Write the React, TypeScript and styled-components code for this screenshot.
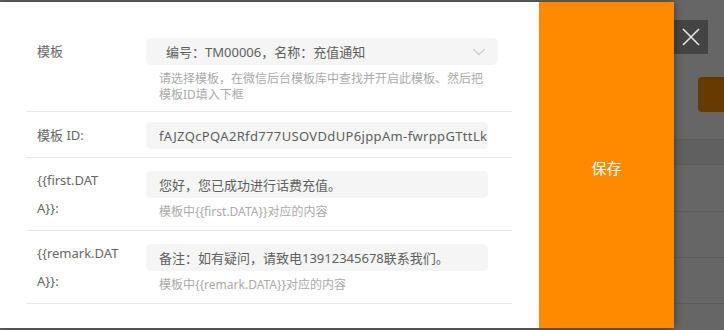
import React from "react";
import styled, { createGlobalStyle } from "styled-components";

const Global = createGlobalStyle`
  html, body { margin: 0; padding: 0; }
  body {
    width: 724px;
    height: 330px;
    overflow: hidden;
    background: #666666;
    font-family: "Noto Sans", "Noto Sans CJK SC", sans-serif;
  }
`;

const Screen = styled.div`
  display: flex;
  align-items: flex-start;
  width: 724px;
  height: 330px;
  background: #666666;
  overflow: hidden;
`;

const Modal = styled.div`
  display: flex;
  width: 674px;
  height: 326px;
  margin-top: 2px;
  flex-shrink: 0;
  background: #ffffff;
  box-shadow: 0 0 8px rgba(0, 0, 0, 0.45);
  position: relative;
  z-index: 1;
`;

const FormBody = styled.div`
  width: 539px;
  box-sizing: border-box;
  padding: 26px 27px 26px 26px;
`;

const Row = styled.div<{ $wrap?: boolean }>`
  display: grid;
  grid-template-columns: 109px 1fr;
  padding: ${(p) => (p.$wrap ? "8px" : "10px")} 0 8px 11px;
  border-bottom: 1px solid #e8e8e8;
`;

const Label = styled.div<{ $wrap?: boolean }>`
  width: 82px;
  font-size: 13px;
  line-height: ${(p) => (p.$wrap ? "28px" : "27px")};
  color: #666666;
  word-break: break-all;
`;

const Field = styled.div<{ $wrap?: boolean }>`
  display: flex;
  flex-direction: column;
  padding-top: ${(p) => (p.$wrap ? "5px" : "0")};
  min-width: 0;
`;

const Box = styled.div<{ $wide?: boolean }>`
  display: flex;
  align-items: center;
  height: 27px;
  width: ${(p) => (p.$wide ? "352px" : "342px")};
  box-sizing: border-box;
  padding: 0 ${(p) => (p.$wide ? "12px" : "1px")} 0 ${(p) => (p.$wide ? "20px" : "13px")};
  background: #f5f5f5;
  border-radius: 5px;
  font-size: 13px;
  color: #5f5f5f;
  overflow: hidden;
`;

const BoxText = styled.span<{ $spaced?: boolean }>`
  flex: 1;
  white-space: nowrap;
  overflow: hidden;
  letter-spacing: ${(p) => (p.$spaced ? "0.35px" : "0")};
`;

const Hint = styled.div`
  margin-top: 6px;
  padding-left: 13px;
  font-size: 12px;
  line-height: 16px;
  color: #aaaaaa;
  width: 330px;
`;

const SaveButton = styled.button`
  flex: 1;
  border: none;
  margin: 0;
  background: #ff8a00;
  color: #ffffff;
  font-family: "Noto Sans CJK SC", sans-serif;
  font-size: 15px;
  display: flex;
  justify-content: center;
  align-items: flex-start;
  padding-top: 155px;
`;

const Side = styled.div`
  flex: 1;
  display: flex;
  flex-direction: column;
  align-items: flex-start;
`;

const CloseButton = styled.div`
  width: 34px;
  height: 34px;
  margin-top: 20px;
  background: #444444;
  display: flex;
  align-items: center;
  justify-content: center;
`;

const BrownButton = styled.div`
  width: 40px;
  height: 35px;
  margin-top: 23px;
  margin-left: 24px;
  background: #663a00;
  border-radius: 4px;
`;

const Band = styled.div<{ $h: number; $dark?: boolean }>`
  width: 100%;
  height: ${(p) => p.$h}px;
  background: ${(p) => (p.$dark ? "#606060" : "transparent")};
  border-bottom: 1px solid #5c5c5c;
  box-sizing: border-box;
`;

const Chevron = () => (
  <svg width="14" height="8" viewBox="0 0 14 8">
    <path d="M1 1 L7 6.5 L13 1" fill="none" stroke="#cfcfcf" strokeWidth="1.3" />
  </svg>
);

const CloseIcon = () => (
  <svg width="20" height="20" viewBox="0 0 20 20">
    <path d="M2 2 L18 18 M18 2 L2 18" stroke="#e6e6e6" strokeWidth="1.6" />
  </svg>
);

export default function App() {
  return (
    <>
      <Global />
      <Screen>
        <Modal>
          <FormBody>
            <Row>
              <Label>模板</Label>
              <Field>
                <Box $wide>
                  <BoxText>编号：TM00006，名称：充值通知</BoxText>
                  <Chevron />
                </Box>
                <Hint>请选择模板，在微信后台模板库中查找并开启此模板、然后把模板ID填入下框</Hint>
              </Field>
            </Row>
            <Row>
              <Label>模板 ID:</Label>
              <Field>
                <Box>
                  <BoxText $spaced>fAJZQcPQA2Rfd777USOVDdUP6jppAm-fwrppGTttLk</BoxText>
                </Box>
              </Field>
            </Row>
            <Row $wrap>
              <Label $wrap>{"{{first.DATA}}:"}</Label>
              <Field $wrap>
                <Box>
                  <BoxText>您好，您已成功进行话费充值。</BoxText>
                </Box>
                <Hint>{"模板中{{first.DATA}}对应的内容"}</Hint>
              </Field>
            </Row>
            <Row $wrap>
              <Label $wrap>{"{{remark.DATA}}:"}</Label>
              <Field $wrap>
                <Box>
                  <BoxText>备注：如有疑问，请致电13912345678联系我们。</BoxText>
                </Box>
                <Hint>{"模板中{{remark.DATA}}对应的内容"}</Hint>
              </Field>
            </Row>
          </FormBody>
          <SaveButton>保存</SaveButton>
        </Modal>
        <Side>
          <CloseButton>
            <CloseIcon />
          </CloseButton>
          <BrownButton />
          <Band $h={28} />
          <Band $h={25} $dark />
          <Band $h={47} />
          <Band $h={46} />
          <Band $h={46} />
        </Side>
      </Screen>
    </>
  );
}
